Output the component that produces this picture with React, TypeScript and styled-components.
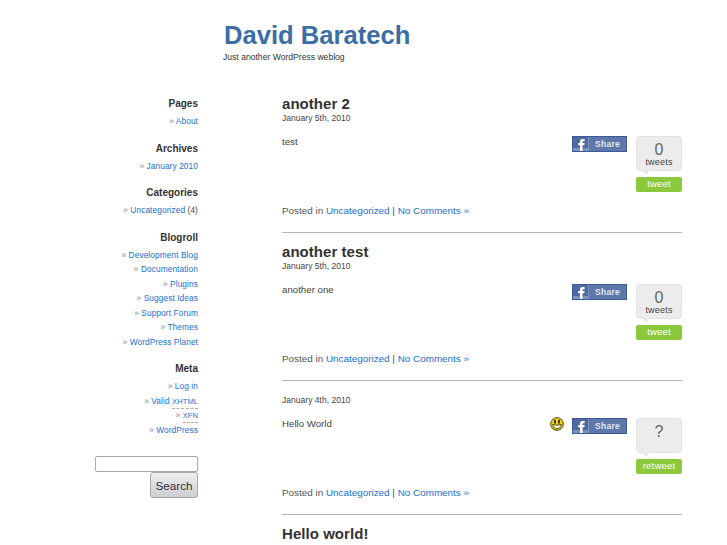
import React from "react";
import styled, { createGlobalStyle } from "styled-components";

const GlobalStyle = createGlobalStyle`
  html, body {
    margin: 0;
    padding: 0;
    height: 545px;
    overflow: hidden;
    background: #ffffff;
    font-family: "Liberation Sans", Arial, sans-serif;
    color: #333333;
  }
  a {
    color: #1a6fd0;
    text-decoration: none;
  }
`;

const Header = styled.header`
  height: 96px;
  padding: 20px 0 0 224px;
  box-sizing: border-box;
`;

const Title = styled.h1`
  margin: 0;
  font-size: 25.6px;
  line-height: 31px;
  font-weight: bold;
  color: #3a6ea5;
`;

const Tagline = styled.div`
  margin: 0 0 0 -1px;
  font-size: 8.6px;
  line-height: 12px;
  color: #333333;
`;

const Layout = styled.div`
  display: flex;
  align-items: flex-start;
`;

const Sidebar = styled.aside`
  width: 198px;
  flex: none;
  text-align: right;
`;

const Widget = styled.section`
  margin-bottom: 12px;
`;

const WidgetTitle = styled.h3`
  margin: 0 0 3px;
  font-size: 10px;
  line-height: 15px;
  font-weight: bold;
  color: #333333;
`;

const LinkList = styled.ul`
  margin: 0;
  padding: 0;
  list-style: none;
`;

const LinkItem = styled.li`
  font-size: 8.3px;
  line-height: 14.5px;
  letter-spacing: 0.1px;
  color: #444444;
`;

const Bullet = styled.span`
  color: #888888;
`;

const Abbr = styled.abbr`
  font-size: 7.5px;
  line-height: 1;
  padding-bottom: 2px;
  border-bottom: 1px dashed #aaaaaa;
  text-decoration: none;
`;

const SearchForm = styled.form`
  margin-top: 19px;
  display: flex;
  flex-direction: column;
  align-items: flex-end;
`;

const SearchInput = styled.input`
  width: 103px;
  height: 16px;
  box-sizing: border-box;
  padding: 0 2px;
  border: 1px solid #a8a8a8;
  border-radius: 2px;
  background: #ffffff;
`;

const SearchButton = styled.button`
  width: 48px;
  height: 26px;
  box-sizing: border-box;
  padding: 0;
  border: 1px solid #a8a8a8;
  border-radius: 3px;
  background: linear-gradient(#eeeeee, #cfcfd3);
  font-family: "Liberation Sans", Arial, sans-serif;
  font-size: 11.7px;
  color: #333333;
`;

const Main = styled.main`
  width: 400px;
  margin-left: 84px;
  flex: none;
`;

const Post = styled.article<{ $short?: boolean }>`
  height: ${(p) => (p.$short ? "119px" : "136px")};
  padding-top: ${(p) => (p.$short ? "3px" : "0")};
  border-bottom: 1px solid #b5b5b5;
  margin-bottom: 11px;
  display: flex;
  flex-direction: column;
`;

const PostTitle = styled.h2`
  margin: -1px 0 1px;
  font-size: 15px;
  line-height: 17px;
  font-weight: bold;
  letter-spacing: 0.05px;
  color: #333333;
`;

const PostDate = styled.div`
  font-size: 8.5px;
  line-height: 11px;
  letter-spacing: 0.03px;
  color: #444444;
`;

const PostBody = styled.div`
  margin-top: 11px;
  display: flex;
  align-items: flex-start;
  flex: 1;
`;

const BodyText = styled.p`
  margin: 0;
  flex: 1;
  font-size: 9.7px;
  line-height: 14px;
  color: #444444;
`;

const Smiley = styled.svg`
  width: 14px;
  height: 14px;
  margin: 0 8px 0 0;
  flex: none;
`;

const ShareButton = styled.a`
  width: 55px;
  height: 16px;
  margin-top: 1px;
  flex: none;
  display: flex;
  box-sizing: border-box;
  border: 1px solid #3b5998;
  background: #5f78ab;
`;

const ShareIcon = styled.svg`
  width: 15px;
  height: 14px;
  flex: none;
  border-right: 1px solid #7f93bb;
  background: #4f6aa3;
`;

const ShareLabel = styled.span`
  flex: 1;
  text-align: center;
  font-size: 8.5px;
  line-height: 14px;
  font-weight: bold;
  letter-spacing: 0.3px;
  color: #dfe5f0;
`;

const TweetBox = styled.div`
  width: 46px;
  margin-left: 9px;
  margin-top: 1px;
  flex: none;
`;

const Counter = styled.div`
  position: relative;
  height: 35px;
  box-sizing: border-box;
  border: 1px solid #e2e2e2;
  border-radius: 4px;
  background: #ececec;
  text-align: center;
  color: #666666;

  &::after {
    content: "";
    position: absolute;
    left: 5px;
    bottom: -5px;
    border-style: solid;
    border-width: 5px 4px 0;
    border-color: #e8e8e8 transparent transparent;
  }
`;

const Count = styled.div`
  font-size: 16px;
  line-height: 17px;
  margin-top: 4px;
`;

const CountLabel = styled.div`
  font-size: 9px;
  line-height: 8px;
  letter-spacing: 0.2px;
  color: #444444;
`;

const TweetButton = styled.a`
  display: block;
  height: 15px;
  margin-top: 6px;
  border-radius: 2px;
  background: #8cc83c;
  text-align: center;
  font-size: 9.5px;
  line-height: 14px;
  letter-spacing: 0.2px;
  color: #ffffff;
`;

const PostFooter = styled.div`
  margin-bottom: 15px;
  font-size: 9.9px;
  line-height: 12px;
  color: #555555;
`;

const widgets = [
  { title: "Pages", links: [{ label: "About" }] },
  { title: "Archives", links: [{ label: "January 2010" }] },
  { title: "Categories", links: [{ label: "Uncategorized", extra: " (4)" }] },
  {
    title: "Blogroll",
    links: [
      { label: "Development Blog" },
      { label: "Documentation" },
      { label: "Plugins" },
      { label: "Suggest Ideas" },
      { label: "Support Forum" },
      { label: "Themes" },
      { label: "WordPress Planet" },
    ],
  },
];

const posts = [
  { title: "another 2", date: "January 5th, 2010", text: "test", count: "0", action: "tweet" },
  { title: "another test", date: "January 5th, 2010", text: "another one", count: "0", action: "tweet" },
  { date: "January 4th, 2010", text: "Hello World", count: "?", action: "retweet", smiley: true },
];

const App = () => (
  <>
    <GlobalStyle />
    <Header>
      <Title>David Baratech</Title>
      <Tagline>Just another WordPress weblog</Tagline>
    </Header>
    <Layout>
      <Sidebar>
        {widgets.map((w) => (
          <Widget key={w.title}>
            <WidgetTitle>{w.title}</WidgetTitle>
            <LinkList>
              {w.links.map((l: { label: string; extra?: string }) => (
                <LinkItem key={l.label}>
                  <Bullet>» </Bullet>
                  <a href="#">{l.label}</a>
                  {l.extra}
                </LinkItem>
              ))}
            </LinkList>
          </Widget>
        ))}
        <Widget>
          <WidgetTitle>Meta</WidgetTitle>
          <LinkList>
            <LinkItem><Bullet>» </Bullet><a href="#">Log in</a></LinkItem>
            <LinkItem><Bullet>» </Bullet><a href="#">Valid <Abbr>XHTML</Abbr></a></LinkItem>
            <LinkItem><Bullet>» </Bullet><a href="#"><Abbr>XFN</Abbr></a></LinkItem>
            <LinkItem><Bullet>» </Bullet><a href="#">WordPress</a></LinkItem>
          </LinkList>
        </Widget>
        <SearchForm>
          <SearchInput type="text" />
          <SearchButton type="button">Search</SearchButton>
        </SearchForm>
      </Sidebar>
      <Main>
        {posts.map((p) => (
          <Post key={p.date + p.text} $short={!p.title}>
            {p.title && <PostTitle>{p.title}</PostTitle>}
            <PostDate>{p.date}</PostDate>
            <PostBody>
              <BodyText>{p.text}</BodyText>
              {p.smiley && (
                <Smiley viewBox="0 0 15 15">
                  <circle cx="7.5" cy="7.5" r="6.8" fill="#f2d20a" stroke="#3a3a2a" />
                  <rect x="4.4" y="3" width="1.8" height="4" fill="#222" />
                  <rect x="8.8" y="3" width="1.8" height="4" fill="#222" />
                  <path d="M2.8 8 Q7.5 9.6 12.2 8 Q11 12.6 7.5 12.6 Q4 12.6 2.8 8 Z" fill="#fff8c0" stroke="#333" strokeWidth="0.9" />
                </Smiley>
              )}
              <ShareButton href="#">
                <ShareIcon viewBox="0 0 15 14">
                  <rect x="0" y="11" width="15" height="3" fill="#7d91bd" />
                  <path d="M7 14V8.2H5.2V6H7V4.6C7 2.8 8.1 2 9.7 2H11.6V4.2H10.4C9.7 4.2 9.5 4.5 9.5 5.1V6H11.6L11.3 8.2H9.5V14Z" fill="#ffffff" />
                </ShareIcon>
                <ShareLabel>Share</ShareLabel>
              </ShareButton>
              <TweetBox>
                <Counter>
                  <Count>{p.count}</Count>
                  {p.count !== "?" && <CountLabel>tweets</CountLabel>}
                </Counter>
                <TweetButton href="#">{p.action}</TweetButton>
              </TweetBox>
            </PostBody>
            <PostFooter>
              Posted in <a href="#">Uncategorized</a> | <a href="#">No Comments »</a>
            </PostFooter>
          </Post>
        ))}
        <PostTitle>Hello world!</PostTitle>
      </Main>
    </Layout>
  </>
);

export default App;
